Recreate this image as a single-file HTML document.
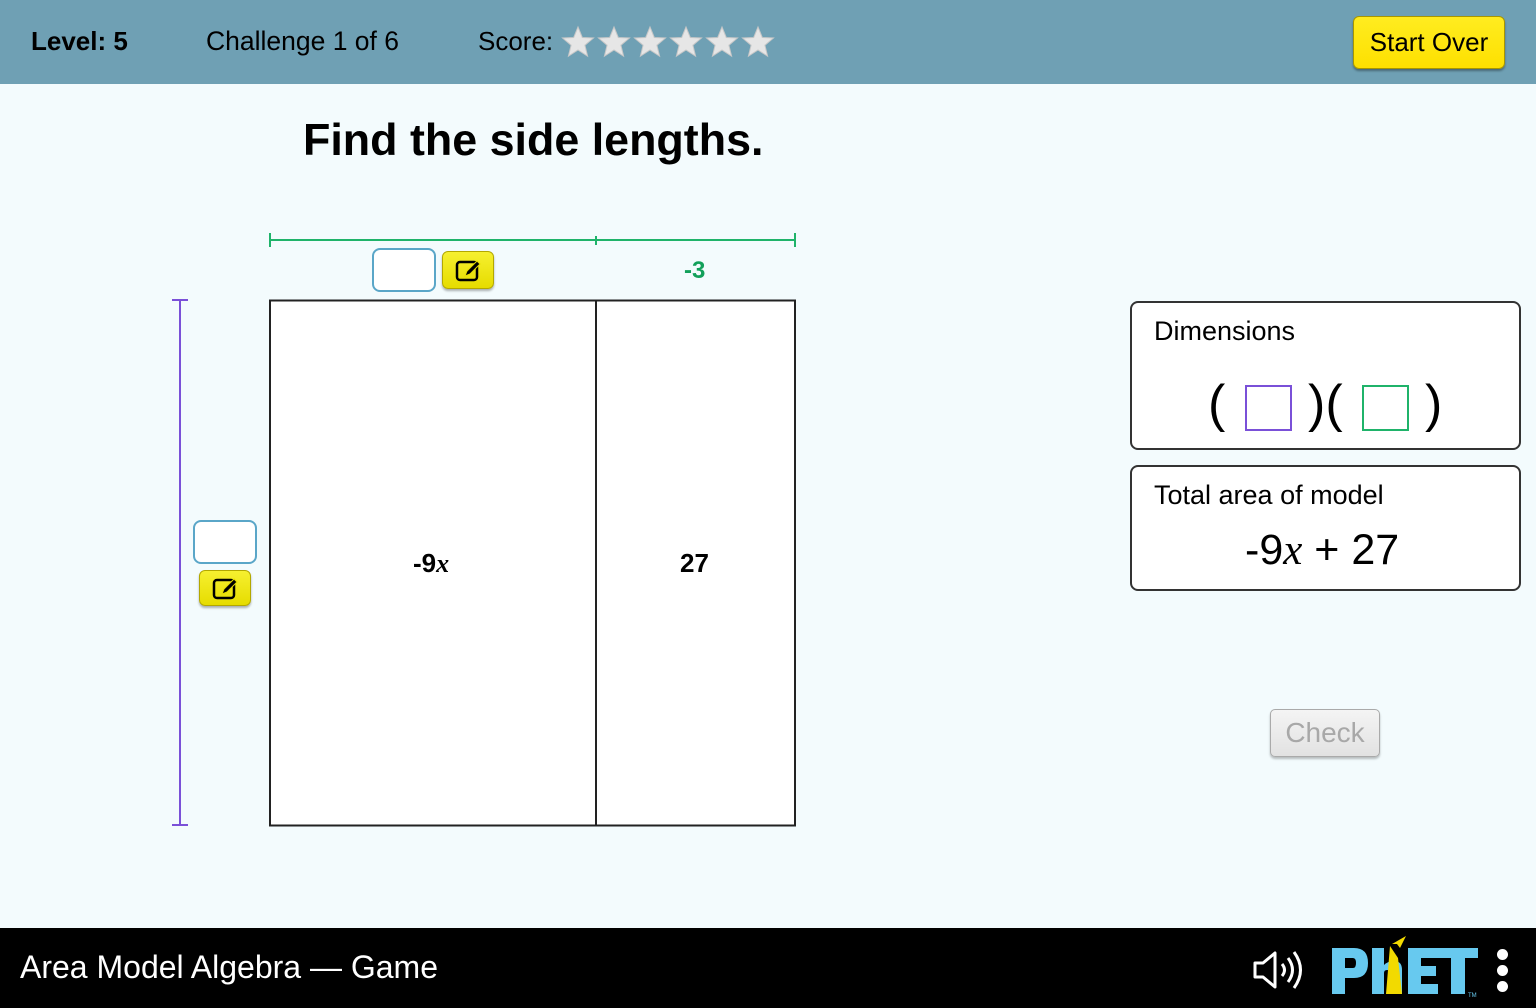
<!DOCTYPE html>
<html><head><meta charset="utf-8"><style>
*{margin:0;padding:0;box-sizing:border-box}
body{width:1536px;height:1008px;position:relative;background:#f3fbfd;font-family:"Liberation Sans",sans-serif;overflow:hidden}
.a{position:absolute}
.hdr{left:0;top:0;width:1536px;height:84px;background:#6fa0b4}
.t{font-size:26px;color:#000;white-space:nowrap}
.ebtn{position:absolute;width:52px;height:38px;border-radius:6px;background:linear-gradient(#f6f030,#e6dc00);border:1px solid #b3a800;box-shadow:0 2px 2px rgba(0,0,0,.3)}
.inp{position:absolute;width:64px;height:44px;border:2px solid #5aa6c8;border-radius:8px;background:#fff}
.panel{position:absolute;border:2px solid #333;border-radius:8px;background:#fff}
</style></head><body>
<div class="a hdr"></div>
<div class="a t" style="left:31px;top:26px;font-weight:bold">Level: 5</div>
<div class="a t" style="left:206px;top:26px;font-size:26.5px">Challenge 1 of 6</div>
<div class="a t" style="left:478px;top:26px">Score:</div>
<svg class="a" style="left:560px;top:24px" width="220" height="36">
<defs><polygon id="st" points="0,-16 4.3,-5.5 15.5,-5 6.9,2.2 9.6,13.2 0,7 -9.6,13.2 -6.9,2.2 -15.5,-5 -4.3,-5.5" fill="#e6e6e6" stroke="#c8c8c8" stroke-width="1"/></defs>
<use href="#st" x="18" y="19"/><use href="#st" x="54" y="19"/><use href="#st" x="90" y="19"/><use href="#st" x="126" y="19"/><use href="#st" x="162" y="19"/><use href="#st" x="198" y="19"/>
</svg>
<div class="a" style="left:1353px;top:16px;width:152px;height:53px;border-radius:6px;background:linear-gradient(#ffec20,#fde000);border:1px solid #a89600;box-shadow:0 2px 2px rgba(0,0,0,.35);font-size:26px;text-align:center;line-height:50px">Start Over</div>

<div class="a" style="left:303px;top:115px;font-size:44.8px;font-weight:bold;white-space:nowrap">Find the side lengths.</div>

<svg class="a" style="left:0;top:0" width="900" height="900">
<g stroke="#1fb36a" stroke-width="2"><line x1="270" y1="240" x2="795" y2="240"/><line x1="270" y1="233" x2="270" y2="247"/><line x1="596" y1="236" x2="596" y2="245"/><line x1="795" y1="233" x2="795" y2="247"/></g>
<g stroke="#7a50d8" stroke-width="2"><line x1="180" y1="300" x2="180" y2="826"/><line x1="172" y1="300" x2="188" y2="300"/><line x1="172" y1="825" x2="188" y2="825"/></g>
<rect x="270" y="300.5" width="525" height="525" fill="#fff" stroke="#222" stroke-width="2"/>
<line x1="596" y1="300" x2="596" y2="826" stroke="#222" stroke-width="2"/>
</svg>
<div class="inp" style="left:372px;top:248px"></div>
<div class="ebtn" style="left:442px;top:251px"><svg width="52" height="38"><rect x="14" y="10" width="20" height="18" rx="3" fill="none" stroke="#000" stroke-width="2.5"/><path d="M22 24 L24 19 L34 9 L37 12 L27 22 Z" fill="#000" stroke="#e6dc00" stroke-width="1"/></svg></div>
<div class="a" style="left:684px;top:257px;font-size:24px;font-weight:bold;color:#12a05a">-3</div>
<div class="inp" style="left:193px;top:520px"></div>
<div class="ebtn" style="left:199px;top:570px;height:36px"><svg width="52" height="36"><rect x="14" y="9" width="20" height="18" rx="3" fill="none" stroke="#000" stroke-width="2.5"/><path d="M22 23 L24 18 L34 8 L37 11 L27 21 Z" fill="#000" stroke="#e6dc00" stroke-width="1"/></svg></div>
<div class="a" style="left:413px;top:548px;font-size:26px;font-weight:bold">-9<i style="font-family:'Liberation Serif',serif">x</i></div>
<div class="a" style="left:680px;top:548px;font-size:26px;font-weight:bold">27</div>

<div class="panel" style="left:1130px;top:301px;width:391px;height:149px">
<div class="a" style="left:22px;top:13px;font-size:27px">Dimensions</div>
<div class="a" style="left:76px;top:66px;font-size:52px;line-height:70px">(</div>
<div class="a" style="left:113px;top:82px;width:47px;height:46px;border:2px solid #7a50d8"></div>
<div class="a" style="left:176px;top:66px;font-size:52px;line-height:70px">)(</div>
<div class="a" style="left:230px;top:82px;width:47px;height:46px;border:2px solid #1fb36a"></div>
<div class="a" style="left:293px;top:66px;font-size:52px;line-height:70px">)</div>
</div>
<div class="panel" style="left:1130px;top:465px;width:391px;height:126px">
<div class="a" style="left:22px;top:13px;font-size:27px;white-space:nowrap">Total area of model</div>
<div class="a" style="left:113px;top:59px;font-size:43px;white-space:nowrap">-9<i style="font-family:'Liberation Serif',serif">x</i> + 27</div>
</div>

<div class="a" style="left:1270px;top:709px;width:110px;height:48px;border:1px solid #aaa;border-radius:5px;background:linear-gradient(#f4f4f4,#e2e2e2);box-shadow:0 2px 2px rgba(0,0,0,.25);font-size:28px;color:#a8a8a8;text-align:center;line-height:46px">Check</div>

<div class="a" style="left:0;top:928px;width:1536px;height:80px;background:#000"></div>
<div class="a" style="left:20px;top:949px;font-size:32px;color:#fff;white-space:nowrap">Area Model Algebra — Game</div>
<svg class="a" style="left:1250px;top:948px" width="56" height="44"><path d="M5 15 H13 L25 5 V39 L13 29 H5 Z" fill="none" stroke="#fff" stroke-width="3" stroke-linejoin="round"/><path d="M32 16 Q37 22 32 28" fill="none" stroke="#fff" stroke-width="3"/><path d="M38 10 Q47 22 38 34" fill="none" stroke="#fff" stroke-width="3"/><path d="M44 4 Q57 22 44 40" fill="none" stroke="#fff" stroke-width="3"/></svg>
<svg class="a" style="left:1328px;top:934px" width="160" height="66">
<path d="M4 14 H26 Q40 14 40 29 Q40 44 26 44 H17 V60 H4 Z M17 24 V34 H25 Q28 34 28 29 Q28 24 25 24 Z" fill="#67c9ef" fill-rule="evenodd"/>
<path d="M44 14 H56 V31 Q60 27 66 27 Q74 27 74 36 V60 H62 V38 Q62 36 59 36 Q56 36 56 39 V60 H44 Z" fill="#67c9ef"/>
<path d="M62 12 L58 60 H74 L70 24 Z" fill="#f2da00"/>
<path d="M64 10 L78 2 L72 14 L69 10 Z" fill="#f2da00"/>
<path d="M80 14 H110 V24 H93 V32 H108 V42 H93 V50 H110 V60 H80 Z" fill="#67c9ef"/>
<path d="M110 14 H150 V24 H137 V60 H123 V24 H110 Z" fill="#67c9ef"/>
<text x="140" y="63" font-size="6" fill="#67c9ef" font-family="Liberation Sans">TM</text>
</svg>
<div class="a" style="left:1497px;top:949px;width:11px;height:11px;border-radius:50%;background:#fff"></div>
<div class="a" style="left:1497px;top:965px;width:11px;height:11px;border-radius:50%;background:#fff"></div>
<div class="a" style="left:1497px;top:981px;width:11px;height:11px;border-radius:50%;background:#fff"></div>
</body></html>
